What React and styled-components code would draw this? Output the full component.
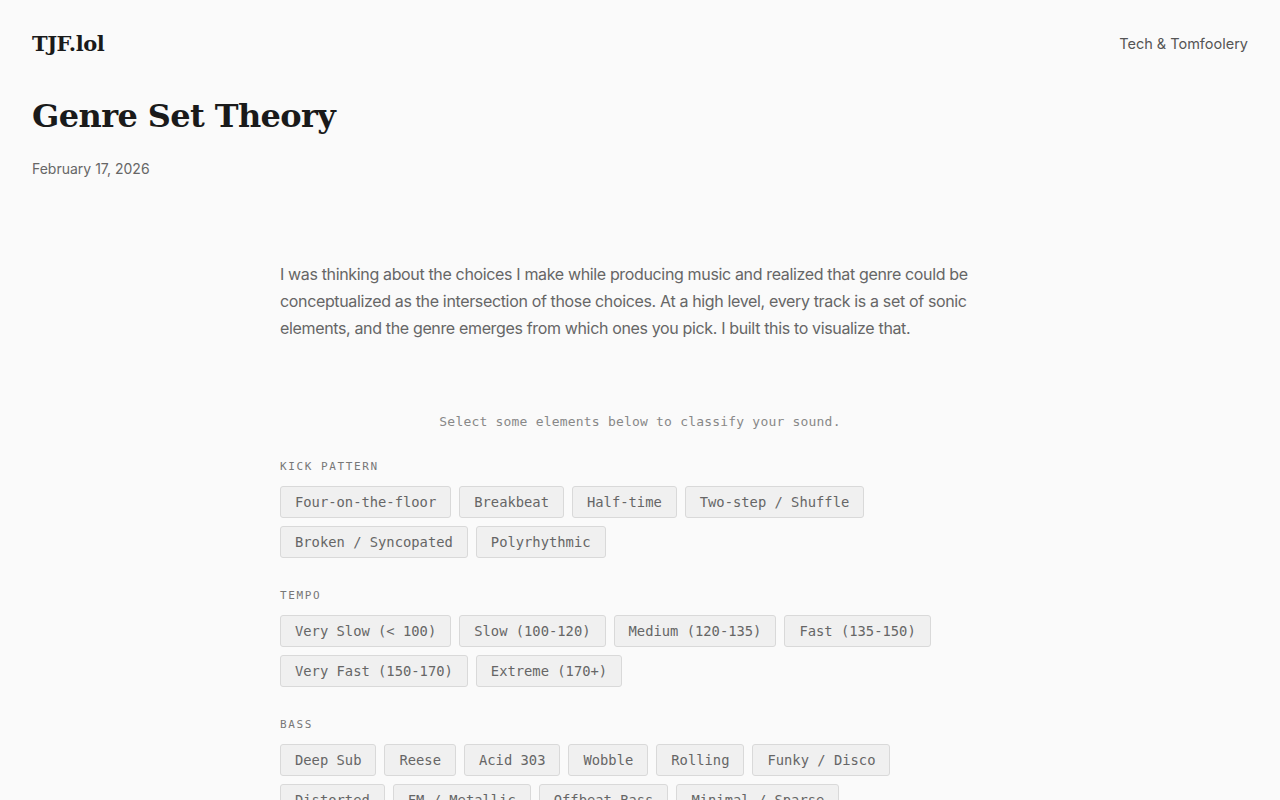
import React from "react";
import styled, { createGlobalStyle } from "styled-components";

const GlobalStyle = createGlobalStyle`
  body {
    margin: 0;
    background: #fafafa;
    color: #1a1a1a;
    font-family: Inter, "Noto Sans", sans-serif;
  }
`;

const sections = [
  {
    label: "Kick Pattern",
    options: [
      "Four-on-the-floor",
      "Breakbeat",
      "Half-time",
      "Two-step / Shuffle",
      "Broken / Syncopated",
      "Polyrhythmic",
    ],
  },
  {
    label: "Tempo",
    options: [
      "Very Slow (< 100)",
      "Slow (100-120)",
      "Medium (120-135)",
      "Fast (135-150)",
      "Very Fast (150-170)",
      "Extreme (170+)",
    ],
  },
  {
    label: "Bass",
    options: [
      "Deep Sub",
      "Reese",
      "Acid 303",
      "Wobble",
      "Rolling",
      "Funky / Disco",
      "Distorted",
      "FM / Metallic",
      "Offbeat Bass",
      "Minimal / Sparse",
    ],
  },
];

function App() {
  return (
    <Page>
      <GlobalStyle />
      <Header>
        <Logo>TJF.lol</Logo>
        <Tagline>Tech &amp; Tomfoolery</Tagline>
      </Header>
      <TitleBlock>
        <Title>Genre Set Theory</Title>
        <Date>February 17, 2026</Date>
      </TitleBlock>
      <Article>
        <Intro>
          I was thinking about the choices I make while producing music and
          realized that genre could be conceptualized as the intersection of
          those choices. At a high level, every track is a set of sonic
          elements, and the genre emerges from which ones you pick. I built
          this to visualize that.
        </Intro>
        <Widget>
          <Prompt>Select some elements below to classify your sound.</Prompt>
          {sections.map((s) => (
            <Group key={s.label}>
              <GroupLabel>{s.label}</GroupLabel>
              <Chips>
                {s.options.map((o) => (
                  <Chip key={o}>{o}</Chip>
                ))}
              </Chips>
            </Group>
          ))}
        </Widget>
      </Article>
    </Page>
  );
}

export default App;

const Page = styled.div`
  min-height: 100vh;
`;

const Header = styled.header`
  display: flex;
  justify-content: space-between;
  align-items: center;
  padding: 31px 32px 0;
`;

const Logo = styled.div`
  font-family: "DejaVu Serif", "Liberation Serif", serif;
  font-weight: bold;
  font-size: 21px;
  letter-spacing: -0.5px;
  color: #1a1a1a;
`;

const Tagline = styled.div`
  font-size: 14.5px;
  color: #555;
`;

const TitleBlock = styled.div`
  padding: 38px 32px 0;
`;

const Title = styled.h1`
  margin: 0;
  font-family: "DejaVu Serif", "Liberation Serif", serif;
  font-weight: bold;
  font-size: 32px;
  letter-spacing: -0.6px;
  line-height: 44px;
  color: #1a1a1a;
`;

const Date = styled.div`
  margin-top: 22px;
  font-size: 14px;
  color: #666;
`;

const Article = styled.main`
  width: 720px;
  margin: 84px auto 0;
`;

const Intro = styled.p`
  margin: 0;
  font-size: 16px;
  line-height: 27px;
  letter-spacing: -0.35px;
  color: #666;
`;

const Widget = styled.section`
  margin-top: 70px;
  font-family: "DejaVu Sans Mono", "Liberation Mono", monospace;
`;

const Prompt = styled.div`
  text-align: center;
  font-size: 13px;
  color: #888;
  letter-spacing: 0.2px;
  line-height: 20px;
  margin-bottom: 28px;
`;

const Group = styled.div`
  margin-bottom: 31px;
`;

const GroupLabel = styled.div`
  font-size: 11px;
  text-transform: uppercase;
  letter-spacing: 1.6px;
  color: #777;
  line-height: 14px;
  margin-bottom: 12px;
`;

const Chips = styled.div`
  display: flex;
  flex-wrap: wrap;
  gap: 8px;
`;

const Chip = styled.button`
  height: 32px;
  padding: 0 14px;
  font-family: inherit;
  font-size: 13.8px;
  color: #666;
  background: #f0f0f0;
  border: 1px solid #d9d9d9;
  border-radius: 3px;
  cursor: pointer;
`;
